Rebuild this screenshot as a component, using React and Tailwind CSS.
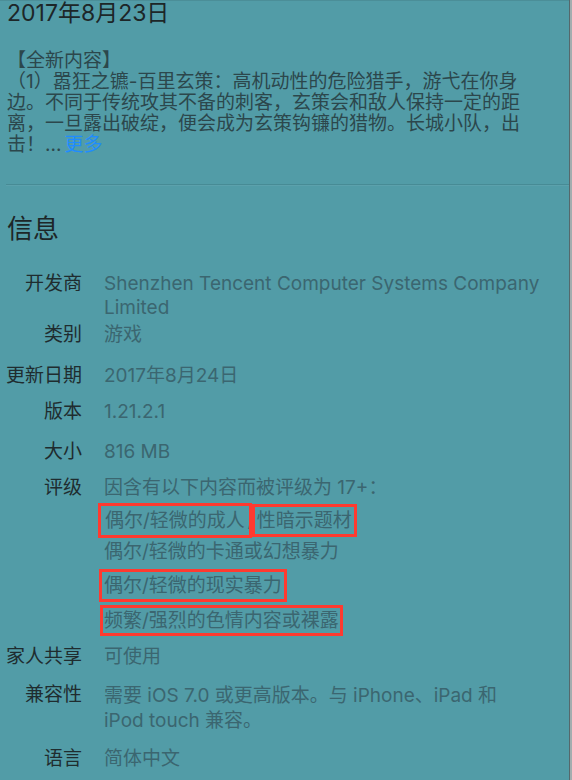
import React from "react";

const rows = [
  { label: "开发商", mt: "mt-0", value: <span>Shenzhen Tencent Computer Systems Company Limited</span> },
  { label: "类别", mt: "mt-[3px]", value: <span>游戏</span> },
  { label: "更新日期", mt: "mt-[17px]", value: <span>2017年8月24日</span> },
  { label: "版本", mt: "mt-[12px]", value: <span>1.21.2.1</span> },
  { label: "大小", mt: "mt-[16px]", value: <span>816 MB</span> },
];

function Boxed({ children, cls }) {
  return (
    <span className={"outline-[3px] outline-solid outline-[#ff3a30] " + cls}>{children}</span>
  );
}

export default function App() {
  return (
    <div className="w-[572px] h-[780px] overflow-hidden bg-[#529ca7] flex font-['Inter','Noto_Sans_CJK_SC',sans-serif]">
      <div className="flex-1 min-w-0 border-t border-[#4b8e98]">
        <div className="pl-[7px] text-[23px] leading-[25px] text-[#1d2628]">2017年8月23日</div>
        <div className="pl-[7px] w-[532px] mt-[24px] text-[19px] leading-[21px] text-[#2c474c]">
          <div>【全新内容】</div>
          <div>
            （1）嚣狂之镳-百里玄策：高机动性的危险猎手，游弋在你身边。不同于传统攻其不备的刺客，玄策会和敌人保持一定的距离，一旦露出破绽，便会成为玄策钩镰的猎物。长城小队，出击！...
            <span className="ml-[3px] text-[#1f8cff]">更多</span>
          </div>
        </div>
        <div className="ml-[6px] mt-[29px] h-px bg-[#478b95] shadow-[0_1px_0_rgba(255,255,255,0.06)]"></div>
        <div className="pl-[7px] mt-[29px] text-[26px] leading-[30px] text-[#1d2628]">信息</div>
        <div className="mt-[28px] text-[19px] leading-[24px]">
          {rows.map((r) => (
            <div key={r.label} className={"flex " + r.mt}>
              <div className="w-[82px] shrink-0 text-right text-[#1f2c2f]">{r.label}</div>
              <div className="ml-[22px] w-[440px] text-[#3b6670]">{r.value}</div>
            </div>
          ))}
          <div className="flex mt-[12px]">
            <div className="w-[82px] shrink-0 text-right text-[#1f2c2f]">评级</div>
            <div className="ml-[22px] flex flex-col text-[#3b6670]">
              <div>因含有以下内容而被评级为 17+：</div>
              <div className="mt-[9px]">
                <Boxed cls="outline-offset-[3px] px-[1px]">偶尔/轻微的成人</Boxed>
                <span className="mx-[2px]">/</span>
                <Boxed cls="outline-offset-[2px]">性暗示题材</Boxed>
              </div>
              <div className="mt-[7px]">偶尔/轻微的卡通或幻想暴力</div>
              <div className="mt-[10px]">
                <Boxed cls="outline-offset-[2px]">偶尔/轻微的现实暴力</Boxed>
              </div>
              <div className="mt-[11px]">
                <Boxed cls="outline-offset-[1px]">频繁/强烈的色情内容或裸露</Boxed>
              </div>
            </div>
          </div>
          <div className="flex mt-[12px]">
            <div className="w-[82px] shrink-0 text-right text-[#1f2c2f]">家人共享</div>
            <div className="ml-[22px] text-[#3b6670]">可使用</div>
          </div>
          <div className="flex mt-[14px]">
            <div className="w-[82px] shrink-0 text-right text-[#1f2c2f]">兼容性</div>
            <div className="ml-[22px] w-[430px] leading-[25px] text-[#3b6670]">需要 iOS 7.0 或更高版本。与 iPhone、iPad 和 iPod touch 兼容。</div>
          </div>
          <div className="flex mt-[14px]">
            <div className="w-[82px] shrink-0 text-right text-[#1f2c2f]">语言</div>
            <div className="ml-[22px] text-[#3b6670]">简体中文</div>
          </div>
        </div>
      </div>
      <div className="w-[3px] shrink-0 flex">
        <div className="w-px bg-[#55686c]"></div>
        <div className="w-[2px] bg-[#a3adaf]"></div>
      </div>
    </div>
  );
}
